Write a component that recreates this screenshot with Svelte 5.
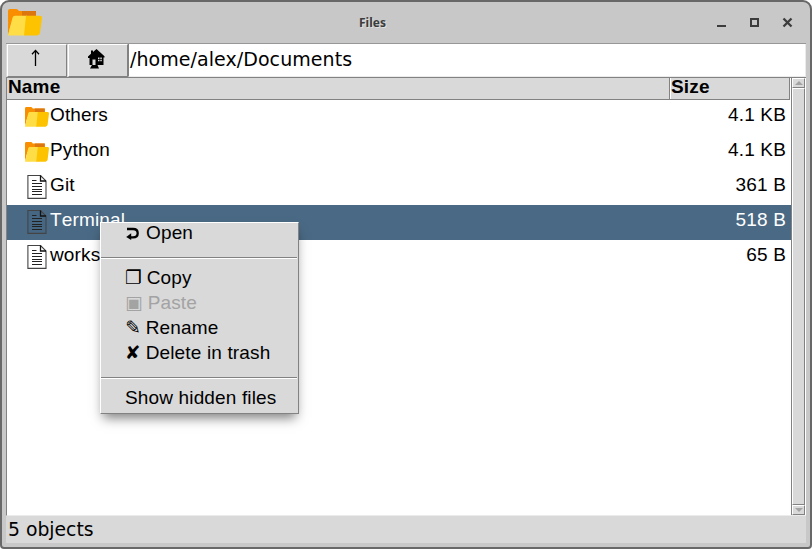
<script>
  const rows = [
    { name: 'Others', size: '4.1 KB', folder: true },
    { name: 'Python', size: '4.1 KB', folder: true },
    { name: 'Git', size: '361 B' },
    { name: 'Terminal', size: '518 B', selected: true },
    { name: 'works', size: '65 B' }
  ];
</script>

{#snippet folder(cls)}
  <svg class={cls} viewBox="0 0 34 28" preserveAspectRatio="none">
    <path d="M0 2Q0 0 2 0H8Q10 0 11 2H28V14H0Z" fill="#f98f00" />
    <path d="M14 2H28V10H14Z" fill="#dc7710" />
    <path d="M0 14V27L5 8H13Z" fill="#f98f00" />
    <path d="M4.5 9Q5 7 7 7H19L17 27.5H0Z" fill="#ffdd47" />
    <path d="M18 7H32Q34 7 34 9L32 25Q31.5 27.5 29 27.5H16Z" fill="#fdc300" />
  </svg>
{/snippet}

<div class="window">
  <header class="titlebar">
    {@render folder('logo')}
    <span class="title">Files</span>
    <svg class="controls" width="80" height="14" viewBox="0 0 80 14">
      <path d="M1 10H10" stroke="#3c3c3c" stroke-width="2" />
      <path d="M35 3H42V10H35Z" fill="none" stroke="#3c3c3c" stroke-width="2" />
      <path d="M67.5 2.5L75.5 10.5M75.5 2.5L67.5 10.5" stroke="#3c3c3c" stroke-width="2.3" />
    </svg>
  </header>
  <div class="toolbar">
    <button class="up" aria-label="Up">
      <svg width="9" height="17" viewBox="0 0 9 17">
        <path d="M4.5 1V17M1 5.2L4.5 1.4L8 5.2" fill="none" stroke="#000" stroke-width="1.3" />
      </svg>
    </button>
    <button aria-label="Home">
      <svg width="18" height="20" viewBox="0 0 18 20">
        <path d="M8.5 0L16.5 7.3V8.5H15.5V16H9.5L11 19.5H2L4 16H1.5V9H0V7.5L3 4.8V1.5H5V3Z" fill="#000" />
        <path d="M4.5 10.5H7.5V16H4.5Z" fill="#d9d9d9" />
        <path d="M10 8.5H11.5V10H10ZM12.3 8.5H13.8V10H12.3ZM10 10.8H11.5V12.2H10ZM12.3 10.8H13.8V12.2H12.3Z" fill="#d9d9d9" />
      </svg>
    </button>
    <div class="path"><span>/home/alex/Documents</span></div>
  </div>
  <div class="tree">
    <div class="list">
      <div class="head"><b class="c1">Name</b><b class="c2">Size</b></div>
      {#each rows as r}
        <div class="row" class:selected={r.selected}>
          {#if r.folder}
            {@render folder('fold')}
          {:else}
            <svg class="doc" width="20" height="24" viewBox="0 0 20 24">
              <path d="M.9 .5H13.5L19 6V23.4H.9Z" fill={r.selected ? '#466784' : '#fff'} stroke="#444" stroke-width="1.1" />
              <path d="M13.5 .5V6H19" fill="none" stroke="#111" stroke-width="1.3" />
              <path d="M5 5.5H9.5M5 8.5H15M5 11.5H15M5 14.5H15M5 16.5H15M5 19.5H15" stroke="#222" stroke-width="1" />
            </svg>
          {/if}
          <span class="name">{r.name}</span>
          <span class="size">{r.size}</span>
        </div>
      {/each}
    </div>
    <div class="scroll">
      <div class="arrow"><svg width="8" height="4"><path d="M0 4L4 0L8 4Z" fill="#a3a3a3" /></svg></div>
      <div class="thumb"></div>
      <div class="arrow"><svg width="8" height="4"><path d="M0 0L4 4L8 0Z" fill="#a3a3a3" /></svg></div>
    </div>
  </div>
  <footer>5 objects</footer>

  <div class="menu">
    <div class="item open">
      <svg width="14" height="13" viewBox="0 0 14 13">
        <path d="M2 2H8C11 2 12.7 3.7 12.7 6.2S11 10.4 8 10.4H5" fill="none" stroke="#000" stroke-width="2.3" />
        <path d="M1.2 10L6.2 6.2V13Z" fill="#000" />
      </svg>
      <span>Open</span>
    </div>
    <hr />
    <div class="item"><i>❐</i><span>Copy</span></div>
    <div class="item disabled"><i>▣</i><span>Paste</span></div>
    <div class="item"><i>✎</i><span>Rename</span></div>
    <div class="item"><i>✘</i><span>Delete in trash</span></div>
    <hr class="second" />
    <div class="item"><span>Show hidden files</span></div>
  </div>
</div>

<style>
  :global(body) { background: #fff; }
  .window {
    position: relative; box-sizing: border-box; width: 812px; height: 549px;
    border: 2px solid #686868; border-radius: 9px 9px 4px 4px; background: #c8c8c8;
    padding: 0 4px 4px; overflow: hidden; display: flex; flex-direction: column;
    font: 19px "Liberation Sans", Arial, sans-serif; font-kerning: none; letter-spacing: .15px; color: #000;
  }
  .titlebar { height: 41px; flex: none; display: flex; align-items: center; }
  .logo { width: 34px; height: 27px; margin: 0 0 0 2px; }
  .title { flex: 1; margin-left: 317px; font: bold 12px "Noto Sans", sans-serif; letter-spacing: 0; color: #3c3c3c; text-shadow: 1px 1px #e0e0e0; }
  .controls { margin-right: 10px; }
  .toolbar { display: flex; height: 34px; flex: none; background: #d9d9d9; border-top: 1px solid #979797; box-sizing: border-box; }
  button {
    box-sizing: border-box; width: 60px; height: 33px; margin: 0 0 0 1px; padding: 0;
    border: 1px solid #fff; border-right: 1px solid #828282; border-bottom: 1px solid #828282;
    background: #d9d9d9; display: flex; align-items: center; justify-content: center;
  }
  button svg { margin-bottom: 4px; margin-left: -2px; }
  .up svg { margin: 0 0 6px -3px; }
  .path {
    flex: 1; background: #fff; border: 1px solid #828282; border-top: 0; border-right-color: #ebebeb; border-bottom-color: #ebebeb;
    box-sizing: border-box; font: 19px/30px "DejaVu Sans", sans-serif; letter-spacing: .06px; padding-left: 1px;
  }
  .tree { flex: 1; min-height: 0; display: flex; background: #fff; border: 1px solid #828282; border-right: 0; border-bottom-color: #ebebeb; box-sizing: border-box; }
  .list { flex: 1; }
  .head { display: flex; height: 22px; box-sizing: border-box; background: #d9d9d9; line-height: 17px; border-bottom: 1px solid #828282; width: 783px; }
  .head b { box-sizing: border-box; padding-left: 1px; border-right: 1px solid #828282; }
  .c1 { width: 663px; }
  .head .c2 { width: 120px; border-left: 1px solid #fff; padding-left: 0; }
  .row { height: 35px; box-sizing: border-box; display: flex; align-items: flex-start; line-height: 22px; padding: 4px 5px 0 18px; }
  .selected { background: #4a6984; color: #fff; }
  .fold { width: 24px; height: 20px; margin: 3px 1px 0 0; }
  .doc { margin: 1px 3px 0 2px; }
  .size { margin-left: auto; }
  .scroll { width: 15px; box-sizing: border-box; background: #d9d9d9; border-left: 1px solid #828282; border-right: 1px solid #fff; display: flex; flex-direction: column; }
  .arrow, .thumb { box-sizing: border-box; border: 1px solid #fff; border-right-color: #828282; border-bottom-color: #828282; }
  .arrow { height: 10px; display: flex; align-items: center; justify-content: center; }
  .thumb { flex: 1; }
  footer { flex: none; height: 27px; background: #d9d9d9; font: 18.8px/27px "DejaVu Sans", sans-serif; letter-spacing: 0; padding-left: 2px; }
  .menu {
    position: absolute; left: 98px; top: 220px; width: 199px; height: 192px; box-sizing: border-box;
    background: #d9d9d9; border: 1px solid #fff; border-right-color: #828282; border-bottom-color: #828282;
    box-shadow: 0 7px 11px -3px rgba(0, 0, 0, .5);
  }
  .item { height: 25px; display: flex; align-items: center; padding-left: 24px; line-height: 25px; white-space: nowrap; }
  .item i { font: 18.67px/25px "DejaVu Sans", sans-serif; letter-spacing: 0; margin-right: 5px; }
  .open { height: 18px; margin-bottom: 16px; }
  .open svg { margin: 3px 7px 0 0; }
  hr { border: 0; border-top: 1px solid #828282; border-bottom: 1px solid #fff; margin: 0 1px 6px 0; }
  .second { margin: 12px 1px 6px 0; }
  .disabled { color: #a3a3a3; }
</style>
